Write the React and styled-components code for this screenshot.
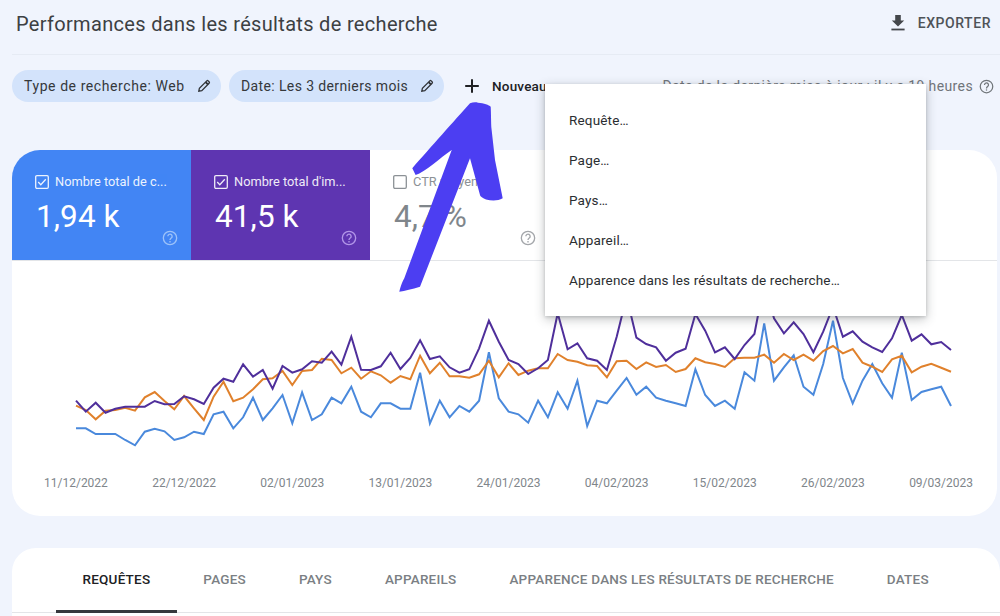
import React from "react";
import styled, { createGlobalStyle } from "styled-components";

const Global = createGlobalStyle`
  html, body { margin: 0; padding: 0; background: #f0f4fd; }
  body { width: 1000px; height: 616px; overflow: hidden; font-family: Roboto, "Liberation Sans", sans-serif; }
`;

const Page = styled.div`
  position: relative;
  width: 1000px;
  height: 616px;
  overflow: hidden;
  background: #f0f4fd;
`;
const Header = styled.header`
  height: 54px;
  margin-left: 12px;
  padding: 0 9px 0 4px;
  display: flex;
  align-items: center;
  justify-content: space-between;
  border-bottom: 1px solid #e6ebf4;
`;
const Title = styled.h1`
  margin: 0 0 6px;
  font-size: 20px;
  font-weight: 400;
  letter-spacing: 0.32px;
  color: #3c4043;
`;
const ExportButton = styled.div`
  display: flex;
  align-items: center;
  gap: 11px;
  margin-bottom: 8px;
  font-size: 14px;
  font-weight: 500;
  letter-spacing: 0.55px;
  color: #4f5358;
`;
const FilterBar = styled.div`
  height: 32px;
  margin-top: 15px;
  padding: 0 6.5px 0 12px;
  display: flex;
  align-items: center;
  gap: 8px;
`;
const Chip = styled.div`
  height: 32px;
  width: ${(p) => p.$w}px;
  box-sizing: border-box;
  padding: 0 10px 0 12px;
  display: flex;
  align-items: center;
  justify-content: space-between;
  border-radius: 16px;
  background: #d3e3fb;
  font-size: 14px;
  letter-spacing: ${(p) => p.$ls}px;
  color: #35383b;
`;
const NewButton = styled.div`
  margin-left: 12px;
  display: flex;
  align-items: center;
  gap: 12px;
  font-size: 13.5px;
  font-weight: 500;
  letter-spacing: 0.2px;
  color: #202124;
`;
const UpdateNote = styled.div`
  margin-left: auto;
  display: flex;
  align-items: center;
  gap: 5.5px;
  font-size: 14px;
  letter-spacing: 0.38px;
  color: #70757a;
`;
const ChartCard = styled.section`
  margin: 48px 3px 0 12px;
  height: 366px;
  border-radius: 28px;
  background: #fff;
  overflow: hidden;
`;
const Tiles = styled.div`
  height: 111px;
  display: flex;
  border-bottom: 1px solid #e3e5e8;
  box-sizing: border-box;
`;
const Tile = styled.div`
  position: relative;
  width: 179px;
  box-sizing: border-box;
  padding: 24px 0 0 23px;
  background: ${(p) => p.$bg || "#fff"};
  color: ${(p) => p.$fg || "#80868b"};
`;
const TileHead = styled.div`
  display: flex;
  align-items: center;
  gap: 6px;
  font-size: 12.8px;
  line-height: 15px;
  opacity: 0.9;
`;
const TileValue = styled.div`
  margin: 9px 0 0 1px;
  font-size: 31.5px;
  line-height: 38px;
  letter-spacing: 0.1px;
`;
const TileHelp = styled.span`
  position: absolute;
  right: 13px;
  bottom: 14px;
  display: flex;
  color: ${(p) => p.$c};
`;
const Plot = styled.svg`
  display: block;
  width: 988px;
  height: 203px;
`;
const Axis = styled.div`
  margin: 12px 24px 0 32px;
  display: flex;
  justify-content: space-between;
  font-size: 12px;
  line-height: 14px;
  letter-spacing: 0;
  color: #80868b;
`;
const TableCard = styled.section`
  margin: 32px 0 0 12px;
  height: 80px;
  border-radius: 24px 24px 0 0;
  background: #fff;
`;
const TabRow = styled.nav`
  height: 64px;
  padding-left: 44px;
  display: flex;
  border-bottom: 1px solid #e3e5e8;
`;
const Tab = styled.div`
  padding: 0 26.5px;
  display: flex;
  align-items: center;
  margin-bottom: -1px;
  font-size: 13.5px;
  font-weight: 500;
  letter-spacing: 0.22px;
  color: ${(p) => (p.$active ? "#202124" : "#7b7f84")};
  border-bottom: 3px solid ${(p) => (p.$active ? "#37393d" : "transparent")};
  box-sizing: border-box;
`;
const Menu = styled.div`
  position: absolute;
  left: 545px;
  top: 84px;
  width: 381px;
  height: 232px;
  padding: 15.5px 0;
  box-sizing: border-box;
  background: #fff;
  box-shadow: 0 3px 10px rgba(60, 64, 67, 0.32), 0 1px 3px rgba(60, 64, 67, 0.2);
`;
const MenuItem = styled.div`
  height: 40px;
  padding-left: 24px;
  display: flex;
  align-items: center;
  font-size: 13.5px;
  letter-spacing: 0.17px;
  color: #2b2e31;
`;
const Arrow = styled.svg`
  position: absolute;
  left: 390px;
  top: 95px;
  width: 120px;
  height: 205px;
`;

const X = (i) => 76 + (875 / 89) * i;
const blue = [415,415,432,432,432,450,466,425,416,424,450,442,425,432,373,365,415,382,323,390,355,315,400,307,390,373,323,340,290,365,382,340,340,356,356,248,400,332,382,348,365,332,187,325,365,373,398,332,382,307,356,272,408,332,340,302,264,314,290,323,332,340,348,238,315,348,332,356,247,272,100,272,232,196,290,314,222,92,264,340,272,222,280,323,188,330,306,298,290,348];
const purple = [332,365,338,368,356,350,350,350,333,343,342,319,328,342,293,266,275,223,260,240,296,228,248,238,214,218,185,224,140,239,240,229,188,237,204,151,207,199,232,248,238,175,92,155,210,222,252,235,210,70,178,160,205,212,240,140,20,143,162,172,212,188,176,72,122,187,172,207,165,132,-20,85,130,97,132,187,125,50,140,124,155,172,186,145,75,152,133,163,156,180];
const orange = [347,360,388,362,360,353,362,322,306,333,358,318,355,390,320,275,334,323,298,268,265,243,285,243,240,206,210,250,233,266,244,256,278,258,268,197,250,218,259,259,263,253,212,262,220,255,242,235,235,192,210,215,226,228,262,214,212,237,217,231,225,246,237,205,217,222,231,205,203,203,194,218,192,210,194,212,183,168,190,177,218,230,246,208,197,247,230,221,233,245];
const pts = (a) => a.map((y, i) => `${(X(i) - 12).toFixed(1)},${(290 + y / 3 - 261).toFixed(1)}`).join(" ");

const Series = styled.polyline`
  fill: none;
  stroke: ${(p) => p.$c};
  stroke-width: 2;
  stroke-linejoin: miter;
`;

const Help = ({ size = 16 }) => (
  <svg width={size} height={size} viewBox="0 0 24 24" fill="none" stroke="currentColor" strokeWidth="2">
    <circle cx="12" cy="12" r="10" />
    <path d="M8.8 9.5a3.2 3.2 0 1 1 5 2.6c-1.1.8-1.8 1.4-1.8 2.9" />
    <path d="M12 16.6v2" />
  </svg>
);
const Check = ({ on }) => (
  <svg width="14" height="14" viewBox="0 0 14 14" fill="none" stroke="currentColor" strokeWidth="1.3">
    <rect x="0.7" y="0.7" width="12.6" height="12.6" rx="1.2" />
    {on && <path d="M3.2 7l2.6 2.7 5-5.4" />}
  </svg>
);
const Pencil = () => (
  <svg width="14" height="14" viewBox="0 0 14 14" fill="none" stroke="#2f3236" strokeWidth="1.3">
    <path d="M1.8 12.2l.6-3L9.8 1.9a1 1 0 0 1 1.4 0l.9.9a1 1 0 0 1 0 1.4L4.8 11.6z" />
    <path d="M8.6 3.1l2.3 2.3" strokeWidth="2" />
  </svg>
);

const chartLabels = ["11/12/2022","22/12/2022","02/01/2023","13/01/2023","24/01/2023","04/02/2023","15/02/2023","26/02/2023","09/03/2023"];
const tabs = ["PAGES","PAYS","APPAREILS","APPARENCE DANS LES RÉSULTATS DE RECHERCHE","DATES"];
const menuItems = ["Requête…","Page…","Pays…","Appareil…","Apparence dans les résultats de recherche…"];

export default function App() {
  return (
    <Page>
      <Global />
      <Header>
        <Title>Performances dans les résultats de recherche</Title>
        <ExportButton>
          <svg width="18" height="18" viewBox="0 0 18 18" fill="#44474b">
            <path d="M6.2 1h5.6v5.6h3.4L9 12.6 2.8 6.6h3.4z" />
            <rect x="2.4" y="14.6" width="13.2" height="1.8" />
          </svg>
          EXPORTER
        </ExportButton>
      </Header>
      <FilterBar>
        <Chip $w={209} $ls={0.58}>Type de recherche: Web <Pencil /></Chip>
        <Chip $w={215} $ls={0.38}>Date: Les 3 derniers mois <Pencil /></Chip>
        <NewButton>
          <svg width="16" height="16" viewBox="0 0 16 16" stroke="#202124" strokeWidth="2">
            <path d="M8 1.2v13.6M1.2 8h13.6" />
          </svg>
          Nouveau
        </NewButton>
        <UpdateNote>
          Date de la dernière mise à jour : il y a 19 heures
          <Help size={15} />
        </UpdateNote>
      </FilterBar>
      <ChartCard>
        <Tiles>
          <Tile $bg="#4285f4" $fg="#fff">
            <TileHead><Check on />Nombre total de c...</TileHead>
            <TileValue>1,94 k</TileValue>
            <TileHelp $c="#9cc2fa"><Help /></TileHelp>
          </Tile>
          <Tile $bg="#5e35b1" $fg="#fff">
            <TileHead><Check on />Nombre total d'im...</TileHead>
            <TileValue>41,5 k</TileValue>
            <TileHelp $c="#b195e8"><Help /></TileHelp>
          </Tile>
          <Tile>
            <TileHead><Check />CTR moyen</TileHead>
            <TileValue>4,7 %</TileValue>
            <TileHelp $c="#a3a6aa"><Help /></TileHelp>
          </Tile>
        </Tiles>
        <Plot viewBox="0 0 988 203">
          <Series points={pts(blue)} $c="#4a89dc" />
          <Series points={pts(orange)} $c="#e0812c" />
          <Series points={pts(purple)} $c="#4f2f9b" />
        </Plot>
        <Axis>
          {chartLabels.map((d) => <span key={d}>{d}</span>)}
        </Axis>
      </ChartCard>
      <TableCard>
        <TabRow>
          <Tab $active>REQUÊTES</Tab>
          {tabs.map((t) => <Tab key={t}>{t}</Tab>)}
        </TabRow>
      </TableCard>
      <Arrow viewBox="390 95 120 205">
        <path
          fill="#4c3ef2"
          d="M399.3 291.7 C401 285 403 280 404 279 L451.7 150 C440 158 425 172 415.6 175 L412.3 168.3 C430 148 455 120 470 103.3 C473 102 476 102 478 102.7 C484 103 489 105 490.7 106.7 C491 112 491 118 491.3 127 L495 160 L502.7 198.3 C498 201 492 201 486 199.5 C482 198 480 196 480 195 L470 158.3 L420 286.7 C412 289 405 291 399.3 291.7 Z"
        />
      </Arrow>
      <Menu>
        {menuItems.map((m) => <MenuItem key={m}>{m}</MenuItem>)}
      </Menu>
    </Page>
  );
}
